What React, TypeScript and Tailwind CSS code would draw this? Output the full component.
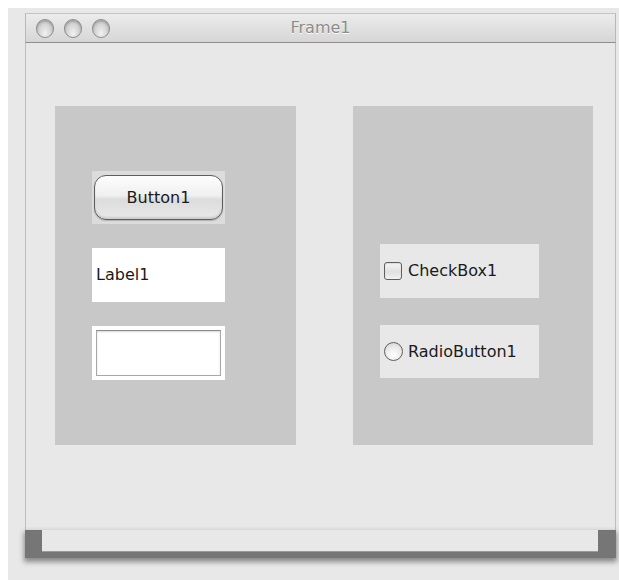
const font = { fontFamily: '"DejaVu Sans", "Liberation Sans", sans-serif' };

function TrafficLight() {
  return (
    <span className="block w-[18px] h-[19px] rounded-full border border-[#8f8f8f] bg-[radial-gradient(ellipse_at_50%_80%,#f2f2f2_0%,#d2d2d2_55%,#b4b4b4_100%)] shadow-[inset_0_2px_2px_rgba(0,0,0,0.18)]" />
  );
}

function PushButton({ label }: { label: string }) {
  return (
    <div className="h-[53px] bg-[#dcdcdc] px-[2px] pt-[4px] pb-[4px] flex">
      <button className="flex-1 rounded-[12px] border border-[#5e5e5e] bg-[linear-gradient(#fdfdfd_0%,#f0f0f0_45%,#dcdcdc_55%,#e9e9e9_100%)] shadow-[inset_0_-2px_2px_rgba(0,0,0,0.12),0_1px_1px_rgba(0,0,0,0.2)] text-[16px] text-[#1a1a1a] flex items-center justify-center">
        {label}
      </button>
    </div>
  );
}

function CheckBox({ label }: { label: string }) {
  return (
    <div className="h-[54px] bg-[#e8e8e8] flex items-center pl-[4px] gap-[6px]">
      <span className="block w-[18px] h-[18px] rounded-[3px] border border-[#5e5e5e] bg-[linear-gradient(#f6f6f6,#e0e0e0_55%,#f2f2f2)] shadow-[inset_0_1px_1px_rgba(0,0,0,0.1)]" />
      <span className="text-[16px] text-[#1a1a1a]">{label}</span>
    </div>
  );
}

function RadioButton({ label }: { label: string }) {
  return (
    <div className="h-[53px] bg-[#e8e8e8] flex items-center pl-[4px] gap-[5px]">
      <span className="block w-[19px] h-[19px] rounded-full border border-[#5e5e5e] bg-[radial-gradient(circle_at_50%_70%,#ffffff_0%,#ececec_50%,#cfcfcf_100%)]" />
      <span className="text-[16px] text-[#1a1a1a]">{label}</span>
    </div>
  );
}

export default function App() {
  return (
    <div className="w-[619px] h-[580px] bg-white pl-[8px] pt-[8px] flex" style={font}>
      <div className="flex-1 bg-[#e8e8e8] pl-[17px] pt-[5px] pr-[3px]">
        <div className="flex flex-col">
          {/* title bar */}
          <div className="h-[30px] relative flex items-center border border-b-[#8e8e8e] border-t-[#c4c4c4] border-x-[#b8b8b8] bg-[linear-gradient(#ececec,#d6d6d6)]">
            <div className="flex gap-[10px] pl-[10px]">
              <TrafficLight />
              <TrafficLight />
              <TrafficLight />
            </div>
            <span className="absolute inset-0 flex items-center justify-center text-[16px] text-[#8c8c8c] [text-shadow:0_1px_0_#ffffff]">
              Frame1
            </span>
          </div>

          {/* content */}
          <div className="h-[487px] bg-[#e8e8e8] border-x border-[#bdbdbd] flex pl-[29px] pt-[63px] gap-[57px]">
            <div className="w-[241px] h-[339px] bg-[#c8c8c8] flex flex-col pl-[37px] pt-[65px]">
              <div className="w-[133px] flex flex-col gap-[24px]">
                <PushButton label="Button1" />
                <div className="h-[54px] bg-white flex items-center pl-[4px] text-[16px] text-[#1a1a1a]">Label1</div>
                <div className="h-[54px] bg-white p-[4px] flex">
                  <div className="flex-1 bg-white border border-[#a8a8a8] border-t-[#8a8a8a] shadow-[inset_0_1px_2px_rgba(0,0,0,0.15)]" />
                </div>
              </div>
            </div>
            <div className="w-[240px] h-[339px] bg-[#c8c8c8] flex flex-col pl-[27px] pt-[138px]">
              <div className="w-[159px] flex flex-col gap-[27px]">
                <CheckBox label="CheckBox1" />
                <RadioButton label="RadioButton1" />
              </div>
            </div>
          </div>

          {/* grow box shadow strip */}
          <div className="h-[28px] bg-[#767676] shadow-[0_3px_5px_1px_#8a8a8a] pl-[17px] pr-[18px]">
            <div className="h-[22px] bg-[#e8e8e8] border-b border-[#9a9a9a]" />
          </div>
        </div>
      </div>
    </div>
  );
}
